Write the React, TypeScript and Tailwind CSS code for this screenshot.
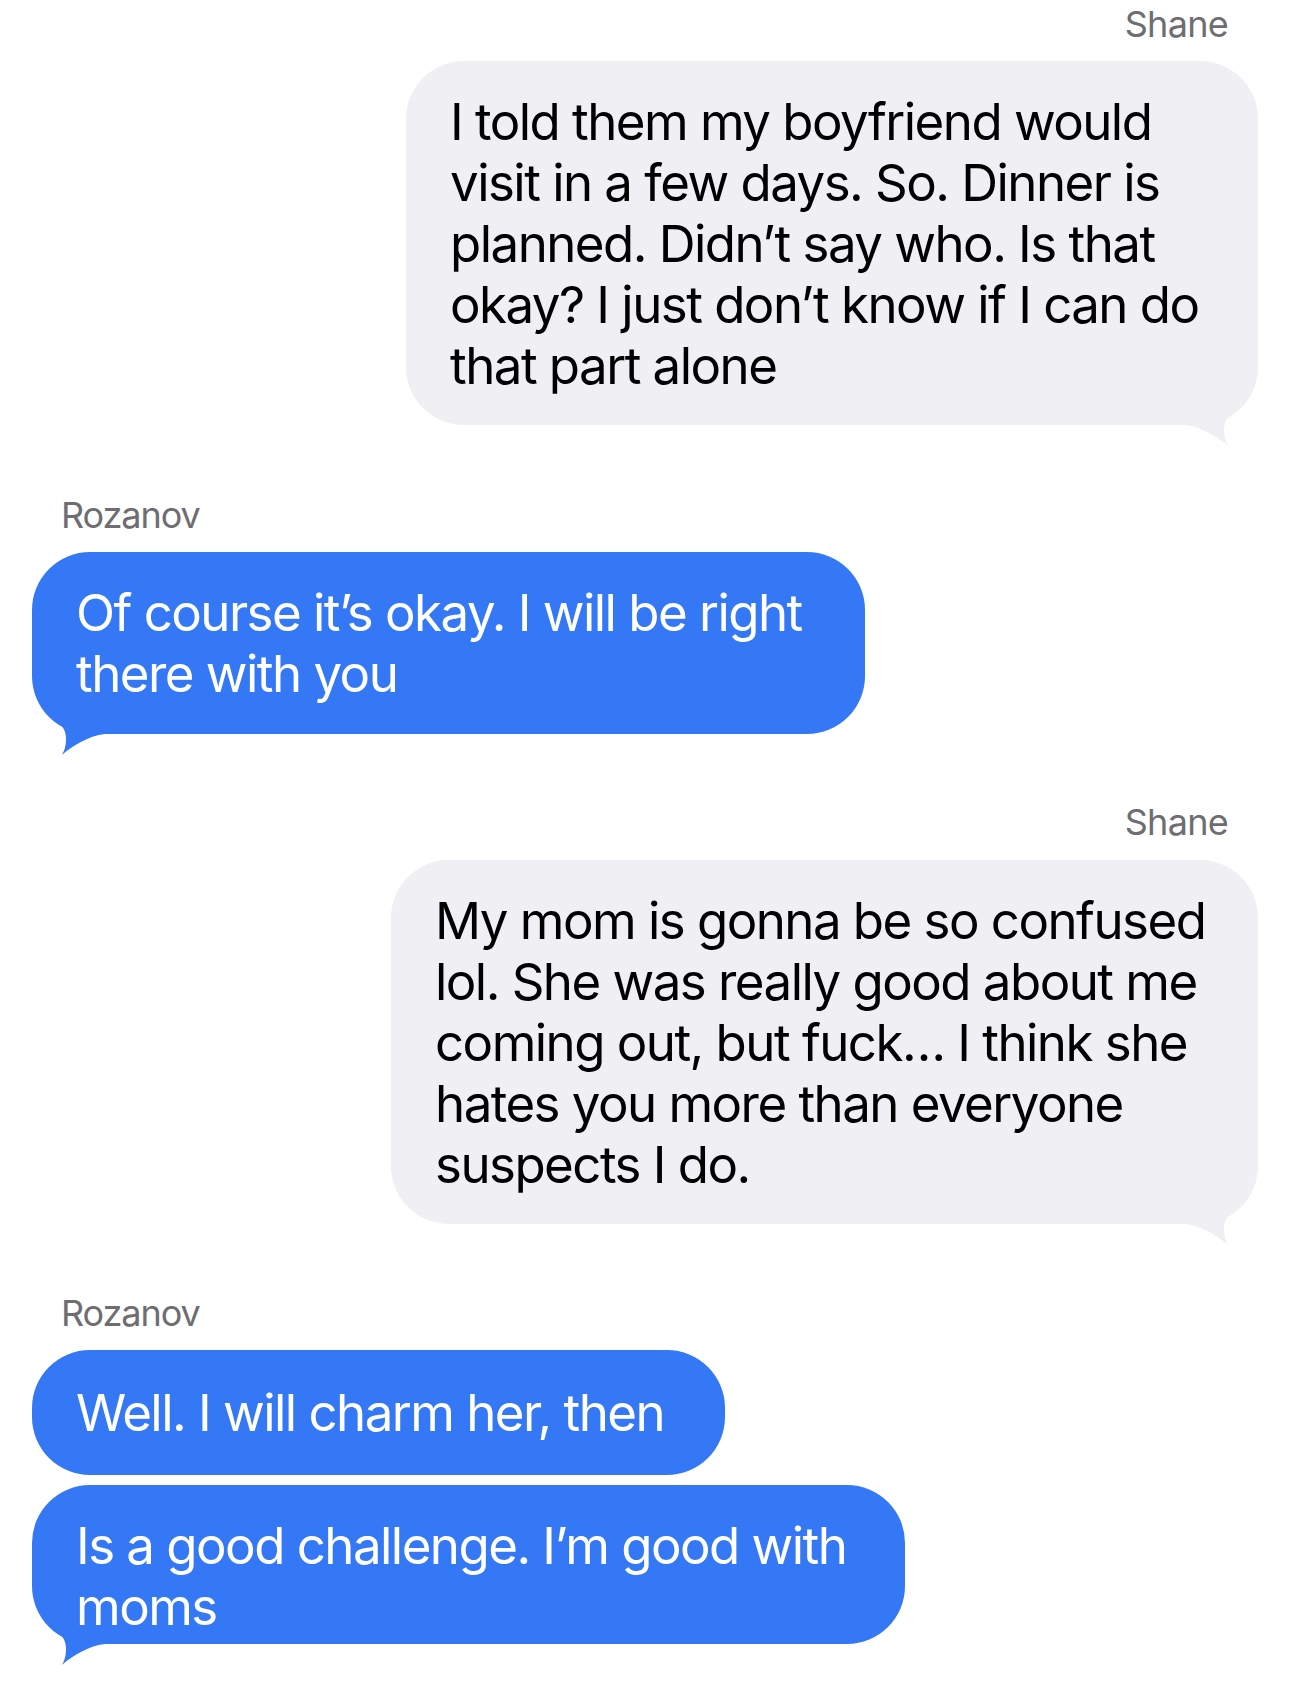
import React from "react";

const Tail = ({ color, flip }: { color: string; flip?: boolean }) => (
  <svg
    width="78"
    height="72"
    viewBox="0 0 78 72"
    className={
      flip
        ? "absolute left-0 bottom-[-22px] -scale-x-100"
        : "absolute right-0 bottom-[-22px]"
    }
  >
    <path
      d="M5 50 C 22 52, 38 62, 48 71 C 44 64, 43 55, 45 48 C 47 42, 50 40, 53 37 C 62 28, 72 16, 76 3 L 0 0 Z"
      fill={color}
    />
  </svg>
);

const Label = ({ name, right }: { name: string; right?: boolean }) => (
  <div
    className={
      right
        ? "h-[44px] leading-[44px] text-[36px] tracking-[-0.02em] text-[#6d6d72] text-right pr-[62px]"
        : "h-[44px] leading-[44px] text-[36px] tracking-[-0.03em] text-[#6d6d72] pl-[61px]"
    }
  >
    {name}
  </div>
);

export default function App() {
  return (
    <div className="w-[1290px] h-[1688px] bg-white overflow-hidden font-['Inter',sans-serif]">
      <div className="pt-[2px]">
        <Label name="Shane" right />
      </div>

      <div className="relative mt-[15px] ml-auto mr-[32px] w-[852px] rounded-[58px] bg-[#efeff4] pl-[44px] pt-[30px] pb-[29px] text-[51px] leading-[61px] tracking-[-0.03em] text-black whitespace-nowrap">
        <Tail color="#efeff4" />
        <div className="relative">
          I told them my boyfriend would
          <br />
          visit in a few days. So. Dinner is
          <br />
          planned. Didn’t say who. Is that
          <br />
          okay? I just don’t know if I can do
          <br />
          that part alone
        </div>
      </div>

      <div className="mt-[68px]">
        <Label name="Rozanov" />
      </div>

      <div className="relative mt-[15px] ml-[32px] w-[833px] rounded-[58px] bg-[#3478f6] pl-[44px] pt-[30px] pb-[30px] text-[51px] leading-[61px] tracking-[-0.03em] text-white whitespace-nowrap">
        <Tail color="#3478f6" flip />
        <div className="relative">
          Of course it’s okay. I will be right
          <br />
          there with you
        </div>
      </div>

      <div className="mt-[66px]">
        <Label name="Shane" right />
      </div>

      <div className="relative mt-[16px] ml-auto mr-[32px] w-[867px] rounded-[58px] bg-[#efeff4] pl-[44px] pt-[30px] pb-[29px] text-[51px] leading-[61px] tracking-[-0.03em] text-black whitespace-nowrap">
        <Tail color="#efeff4" />
        <div className="relative">
          My mom is gonna be so confused
          <br />
          lol. She was really good about me
          <br />
          coming out, but fuck… I think she
          <br />
          hates you more than everyone
          <br />
          suspects I do.
        </div>
      </div>

      <div className="mt-[67px]">
        <Label name="Rozanov" />
      </div>

      <div className="relative mt-[15px] ml-[32px] w-[693px] rounded-[58px] bg-[#3478f6] pl-[44px] pt-[32px] pb-[32px] text-[51px] leading-[61px] tracking-[-0.03em] text-white whitespace-nowrap">
        Well. I will charm her, then
      </div>

      <div className="relative mt-[10px] ml-[32px] w-[873px] rounded-[58px] bg-[#3478f6] pl-[44px] pt-[30px] pb-[7px] text-[51px] leading-[61px] tracking-[-0.03em] text-white whitespace-nowrap">
        <Tail color="#3478f6" flip />
        <div className="relative">
          Is a good challenge. I’m good with
          <br />
          moms
        </div>
      </div>
    </div>
  );
}
